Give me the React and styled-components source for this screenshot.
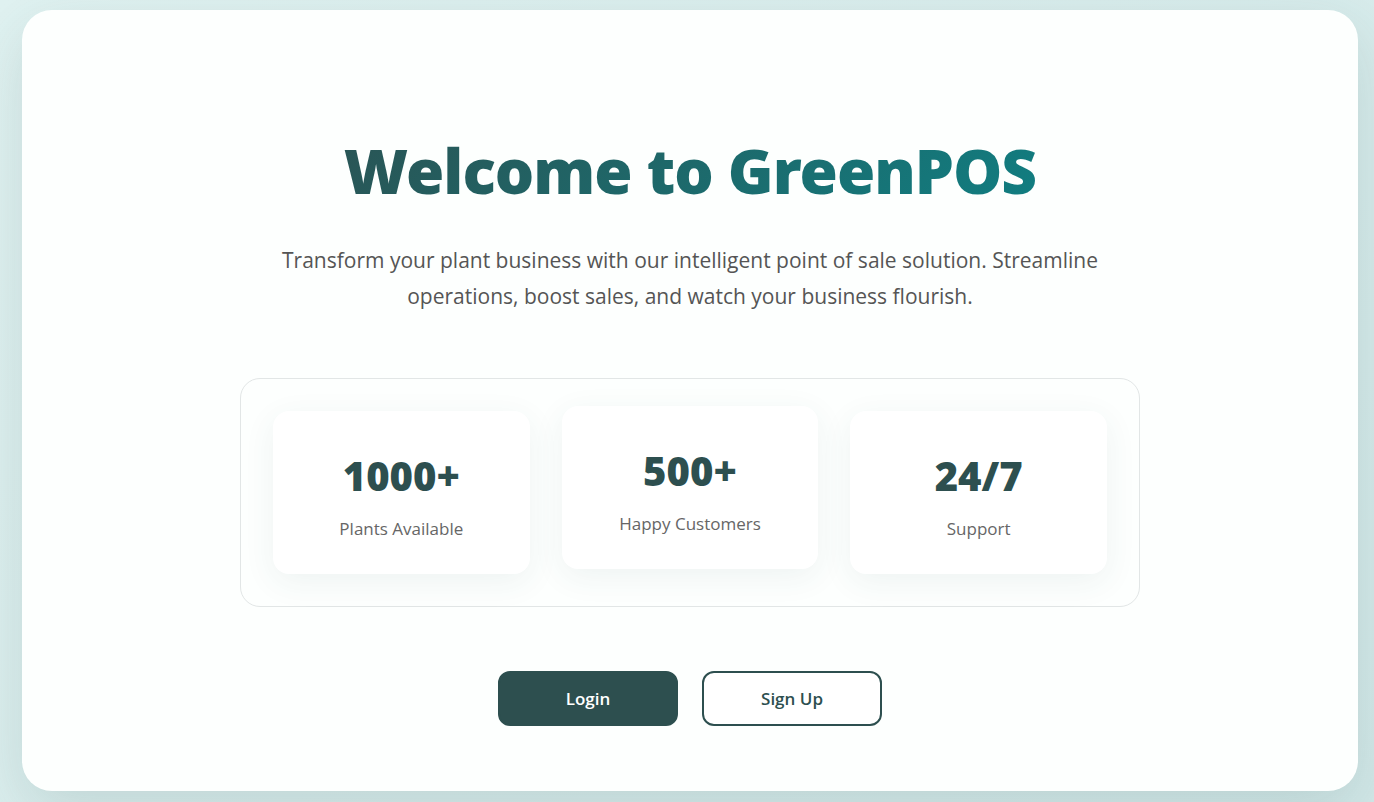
import React from "react";
import styled, { createGlobalStyle } from "styled-components";

const Global = createGlobalStyle`
  * { box-sizing: border-box; }
  html, body { margin: 0; }
  body {
    min-height: 100vh;
    font-family: "Segoe UI", "Open Sans", "Noto Sans", sans-serif;
    background: linear-gradient(135deg, #e0f2f1 0%, #d2e8e8 100%);
  }
  #root { min-height: 100vh; display: flex; }
`;

const Page = styled.div`
  flex: 1;
  display: flex;
  padding: 10px 16px 11px 22px;
`;

const Hero = styled.main`
  flex: 1;
  display: flex;
  flex-direction: column;
  align-items: center;
  padding: 120px 32px 64px;
  border-radius: 30px;
  background: #fdfffe;
  box-shadow: 0 20px 60px rgba(47, 79, 79, 0.15);
`;

const Title = styled.h1`
  width: 100%;
  max-width: 900px;
  margin: 0;
  font-family: "Noto Sans", sans-serif;
  font-size: 62px;
  line-height: 80px;
  font-weight: 900;
  letter-spacing: -1px;
  text-align: center;
  color: transparent;
  background: linear-gradient(135deg, #2d4f4f 0%, #0d8387 100%);
  background-clip: text;
  -webkit-background-clip: text;
`;

const Lead = styled.p`
  max-width: 850px;
  margin: 32px 0 64px;
  font-size: 21px;
  line-height: 36px;
  text-align: center;
  color: #555;
`;

const Stats = styled.section`
  width: 100%;
  max-width: 900px;
  display: grid;
  grid-template-columns: repeat(3, 1fr);
  gap: 32px;
  padding: 32px;
  border: 1px solid #e2e6e6;
  border-radius: 20px;
`;

const Stat = styled.div`
  display: flex;
  flex-direction: column;
  align-items: center;
  padding: 32px;
  border-radius: 16px;
  background: #fff;
  box-shadow: 0 8px 32px rgba(47, 79, 79, 0.07);
  transform: ${(p) => (p.$raised ? "translateY(-5px)" : "none")};
`;

const Value = styled.strong`
  font-family: "Noto Sans", sans-serif;
  font-size: 40px;
  line-height: 66px;
  font-weight: 900;
  color: #2d4f4f;
`;

const Label = styled.span`
  margin-top: 6px;
  font-size: 17px;
  line-height: 27px;
  color: #666;
`;

const Actions = styled.div`
  display: flex;
  gap: 24px;
  margin-top: 64px;
`;

const Button = styled.button`
  width: 180px;
  height: 55px;
  border: 2px solid #2d4f4f;
  border-radius: 12px;
  font-family: inherit;
  font-size: 17px;
  font-weight: 600;
  color: ${(p) => (p.$primary ? "#fff" : "#2d4f4f")};
  background: ${(p) => (p.$primary ? "#2d4f4f" : "#fff")};
  cursor: pointer;
`;

const stats = [
  { value: "1000+", label: "Plants Available" },
  { value: "500+", label: "Happy Customers", raised: true },
  { value: "24/7", label: "Support" },
];

export default function App() {
  return (
    <>
      <Global />
      <Page>
        <Hero>
          <Title>Welcome to GreenPOS</Title>
          <Lead>
            Transform your plant business with our intelligent point of sale solution. Streamline
            operations, boost sales, and watch your business flourish.
          </Lead>
          <Stats>
            {stats.map((s) => (
              <Stat key={s.label} $raised={s.raised}>
                <Value>{s.value}</Value>
                <Label>{s.label}</Label>
              </Stat>
            ))}
          </Stats>
          <Actions>
            <Button type="button" $primary>Login</Button>
            <Button type="button">Sign Up</Button>
          </Actions>
        </Hero>
      </Page>
    </>
  );
}
